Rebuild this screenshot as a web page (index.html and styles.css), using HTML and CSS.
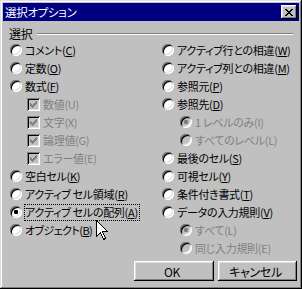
FILE: index.html
```html
<!DOCTYPE html>
<html lang="ja">
<head>
<meta charset="utf-8">
<title>選択オプション</title>
<link rel="stylesheet" href="styles.css">
</head>
<body>
<div class="window">
  <div class="titlebar">
    <span class="title">選択オプション</span>
    <span class="close">
      <svg width="8" height="7" viewBox="0 0 8 7" shape-rendering="crispEdges">
        <g fill="#000">
          <rect x="0" y="0" width="2" height="1"/><rect x="6" y="0" width="2" height="1"/>
          <rect x="1" y="1" width="2" height="1"/><rect x="5" y="1" width="2" height="1"/>
          <rect x="2" y="2" width="4" height="1"/>
          <rect x="3" y="3" width="2" height="1"/>
          <rect x="2" y="4" width="4" height="1"/>
          <rect x="1" y="5" width="2" height="1"/><rect x="5" y="5" width="2" height="1"/>
          <rect x="0" y="6" width="2" height="1"/><rect x="6" y="6" width="2" height="1"/>
        </g>
      </svg>
    </span>
  </div>
  <div class="body">
    <div class="group-head"><span class="group-label">選択</span><span class="group-line"></span></div>
    <div class="columns">
      <div class="col col-left">
        <div class="row"><span class="radio"></span><span class="label">コメント(<u>C</u>)</span></div>
        <div class="row"><span class="radio"></span><span class="label">定数(<u>O</u>)</span></div>
        <div class="row"><span class="radio"></span><span class="label">数式(<u>F</u>)</span></div>
        <div class="row sub-check"><span class="check"><svg width="7" height="7" viewBox="0 0 7 7" shape-rendering="crispEdges"><g fill="#808080"><rect x="6" y="0" width="1" height="1"/><rect x="5" y="1" width="2" height="1"/><rect x="0" y="2" width="1" height="1"/><rect x="4" y="2" width="3" height="1"/><rect x="0" y="3" width="2" height="1"/><rect x="3" y="3" width="3" height="1"/><rect x="0" y="4" width="5" height="1"/><rect x="1" y="5" width="3" height="1"/><rect x="2" y="6" width="1" height="1"/></g></svg></span><span class="label disabled">数値(U)</span></div>
        <div class="row sub-check"><span class="check"><svg width="7" height="7" viewBox="0 0 7 7" shape-rendering="crispEdges"><g fill="#808080"><rect x="6" y="0" width="1" height="1"/><rect x="5" y="1" width="2" height="1"/><rect x="0" y="2" width="1" height="1"/><rect x="4" y="2" width="3" height="1"/><rect x="0" y="3" width="2" height="1"/><rect x="3" y="3" width="3" height="1"/><rect x="0" y="4" width="5" height="1"/><rect x="1" y="5" width="3" height="1"/><rect x="2" y="6" width="1" height="1"/></g></svg></span><span class="label disabled">文字(X)</span></div>
        <div class="row sub-check"><span class="check"><svg width="7" height="7" viewBox="0 0 7 7" shape-rendering="crispEdges"><g fill="#808080"><rect x="6" y="0" width="1" height="1"/><rect x="5" y="1" width="2" height="1"/><rect x="0" y="2" width="1" height="1"/><rect x="4" y="2" width="3" height="1"/><rect x="0" y="3" width="2" height="1"/><rect x="3" y="3" width="3" height="1"/><rect x="0" y="4" width="5" height="1"/><rect x="1" y="5" width="3" height="1"/><rect x="2" y="6" width="1" height="1"/></g></svg></span><span class="label disabled">論理値(G)</span></div>
        <div class="row sub-check"><span class="check"><svg width="7" height="7" viewBox="0 0 7 7" shape-rendering="crispEdges"><g fill="#808080"><rect x="6" y="0" width="1" height="1"/><rect x="5" y="1" width="2" height="1"/><rect x="0" y="2" width="1" height="1"/><rect x="4" y="2" width="3" height="1"/><rect x="0" y="3" width="2" height="1"/><rect x="3" y="3" width="3" height="1"/><rect x="0" y="4" width="5" height="1"/><rect x="1" y="5" width="3" height="1"/><rect x="2" y="6" width="1" height="1"/></g></svg></span><span class="label disabled">エラー値(E)</span></div>
        <div class="row"><span class="radio"></span><span class="label">空白セル(<u>K</u>)</span></div>
        <div class="row"><span class="radio"></span><span class="label">アクティブ セル領域(<u>R</u>)</span></div>
        <div class="row"><span class="radio checked"></span><span class="label focus">アクティブ セルの配列(<u>A</u>)</span></div>
        <div class="row"><span class="radio"></span><span class="label tight">オブジェクト(<u>B</u>)</span></div>
      </div>
      <div class="col col-right">
        <div class="row"><span class="radio"></span><span class="label">アクティブ行との相違(<u>W</u>)</span></div>
        <div class="row"><span class="radio"></span><span class="label">アクティブ列との相違(<u>M</u>)</span></div>
        <div class="row"><span class="radio"></span><span class="label">参照元(<u>P</u>)</span></div>
        <div class="row"><span class="radio"></span><span class="label">参照先(<u>D</u>)</span></div>
        <div class="row sub-radio"><span class="radio disabled-radio checked"></span><span class="label disabled">1 レベルのみ(I)</span></div>
        <div class="row sub-radio"><span class="radio disabled-radio"></span><span class="label disabled">すべてのレベル(L)</span></div>
        <div class="row"><span class="radio"></span><span class="label">最後のセル(<u>S</u>)</span></div>
        <div class="row"><span class="radio"></span><span class="label">可視セル(<u>Y</u>)</span></div>
        <div class="row"><span class="radio"></span><span class="label">条件付き書式(<u>T</u>)</span></div>
        <div class="row"><span class="radio"></span><span class="label">データの入力規則(<u>V</u>)</span></div>
        <div class="row sub-radio"><span class="radio disabled-radio checked"></span><span class="label disabled">すべて(L)</span></div>
        <div class="row sub-radio"><span class="radio disabled-radio"></span><span class="label disabled">同じ入力規則(E)</span></div>
      </div>
    </div>
    <div class="buttons">
      <div class="btn btn-ok">OK</div>
      <div class="btn btn-cancel">キャンセル</div>
    </div>
  </div>
  <svg class="cursor" width="13" height="21" viewBox="0 0 13 21" shape-rendering="crispEdges">
    <path d="M0.5,0.5 L0.5,16.5 L4.5,12.5 L7.5,19.5 L9.5,18.5 L6.5,11.5 L11.5,11.5 Z" fill="#fff" stroke="#000" stroke-width="1" stroke-linejoin="miter"/>
  </svg>
</div>
</body>
</html>
```
FILE: styles.css
```css
* { box-sizing: border-box; }
html, body { margin: 0; padding: 0; }
body {
  width: 302px;
  height: 289px;
  overflow: hidden;
  background: #c0c0c0;
  font-family: "Noto Sans CJK JP", "Noto Sans", sans-serif;
  font-size: 11px;
  letter-spacing: -0.3px;
  color: #000;
}
.window {
  position: relative;
  width: 302px;
  height: 289px;
  padding: 3px;
  background: #c0c0c0;
  box-shadow: inset -1px -1px #000, inset 1px 1px #dfdfdf, inset -2px -2px #808080, inset 2px 2px #fff;
  display: flex;
  flex-direction: column;
}
.titlebar {
  height: 18px;
  background: #000080;
  color: #fff;
  display: flex;
  align-items: center;
  justify-content: space-between;
  padding: 0 2px 0 2px;
}
.title { line-height: 18px; font-size: 11.5px; font-feature-settings: "palt"; }
.close {
  width: 16px;
  height: 14px;
  background: #c0c0c0;
  box-shadow: inset -1px -1px #000, inset 1px 1px #fff, inset -2px -2px #808080, inset 2px 2px #dfdfdf;
  display: flex;
  align-items: center;
  justify-content: center;
}
.close svg { display: block; margin-left: -1px; }
.body {
  flex: 1;
  padding: 0 2px 0 7px;
  display: flex;
  flex-direction: column;
}
.group-head {
  height: 14px;
  margin: 6px 4px 0 -1px;
  display: flex;
  align-items: center;
  gap: 5px;
}
.group-label { line-height: 14px; font-size: 12px; font-feature-settings: "palt"; }
.group-line {
  flex: 1;
  height: 2px;
  border-top: 1px solid #808080;
  border-bottom: 1px solid #fff;
}
.columns { display: flex; align-items: flex-start; }
.col-left { flex: none; width: 152px; }
.col-right { flex: 1; min-width: 0; }
.row {
  height: 18px;
  display: flex;
  align-items: center;
  gap: 3px;
}
.sub-check { padding-left: 17px; }
.sub-radio { padding-left: 18px; }
.label {
  line-height: 15px;
  white-space: nowrap;
  font-feature-settings: "palt";
}
.label.tight { letter-spacing: -0.6px; }
.label u { text-underline-offset: 1px; }
.disabled { color: #808080; }
.focus {
  border: 1px dotted #000;
  margin-left: -1px;
  padding: 0 1px 0 0;
  line-height: 15px;
}
.radio {
  position: relative;
  flex: none;
  width: 12px;
  height: 12px;
  border-radius: 50%;
  background: #fff;
  box-shadow: inset 1px 1px 0 #808080, inset -1px -1px 0 #fff, inset 2px 2px 0 #000, inset -2px -2px 0 #dfdfdf;
}
.radio.disabled-radio { background: #c0c0c0; }
.radio.checked::after {
  content: "";
  position: absolute;
  left: 4px;
  top: 4px;
  width: 4px;
  height: 4px;
  border-radius: 1px;
  background: #000;
}
.radio.disabled-radio.checked::after { background: #808080; }
.check {
  flex: none;
  width: 13px;
  height: 13px;
  background: #c0c0c0;
  box-shadow: inset 1px 1px 0 #808080, inset -1px -1px 0 #fff, inset 2px 2px 0 #000, inset -2px -2px 0 #dfdfdf;
  display: flex;
  align-items: center;
  justify-content: center;
}
.check svg { display: block; }
.buttons {
  display: flex;
  justify-content: flex-end;
  gap: 4px;
  margin-top: 4px;
}
.btn {
  height: 20px;
  display: flex;
  align-items: center;
  justify-content: center;
  background: #c0c0c0;
  box-shadow: inset -1px -1px #000, inset 1px 1px #fff, inset -2px -2px #808080, inset 2px 2px #dfdfdf;
  font-size: 12px;
  font-feature-settings: "palt";
  padding-right: 4px;
}
.btn-ok { width: 80px; }
.btn-cancel { width: 79px; }
.cursor {
  position: absolute;
  left: 96px;
  top: 220px;
}
```
